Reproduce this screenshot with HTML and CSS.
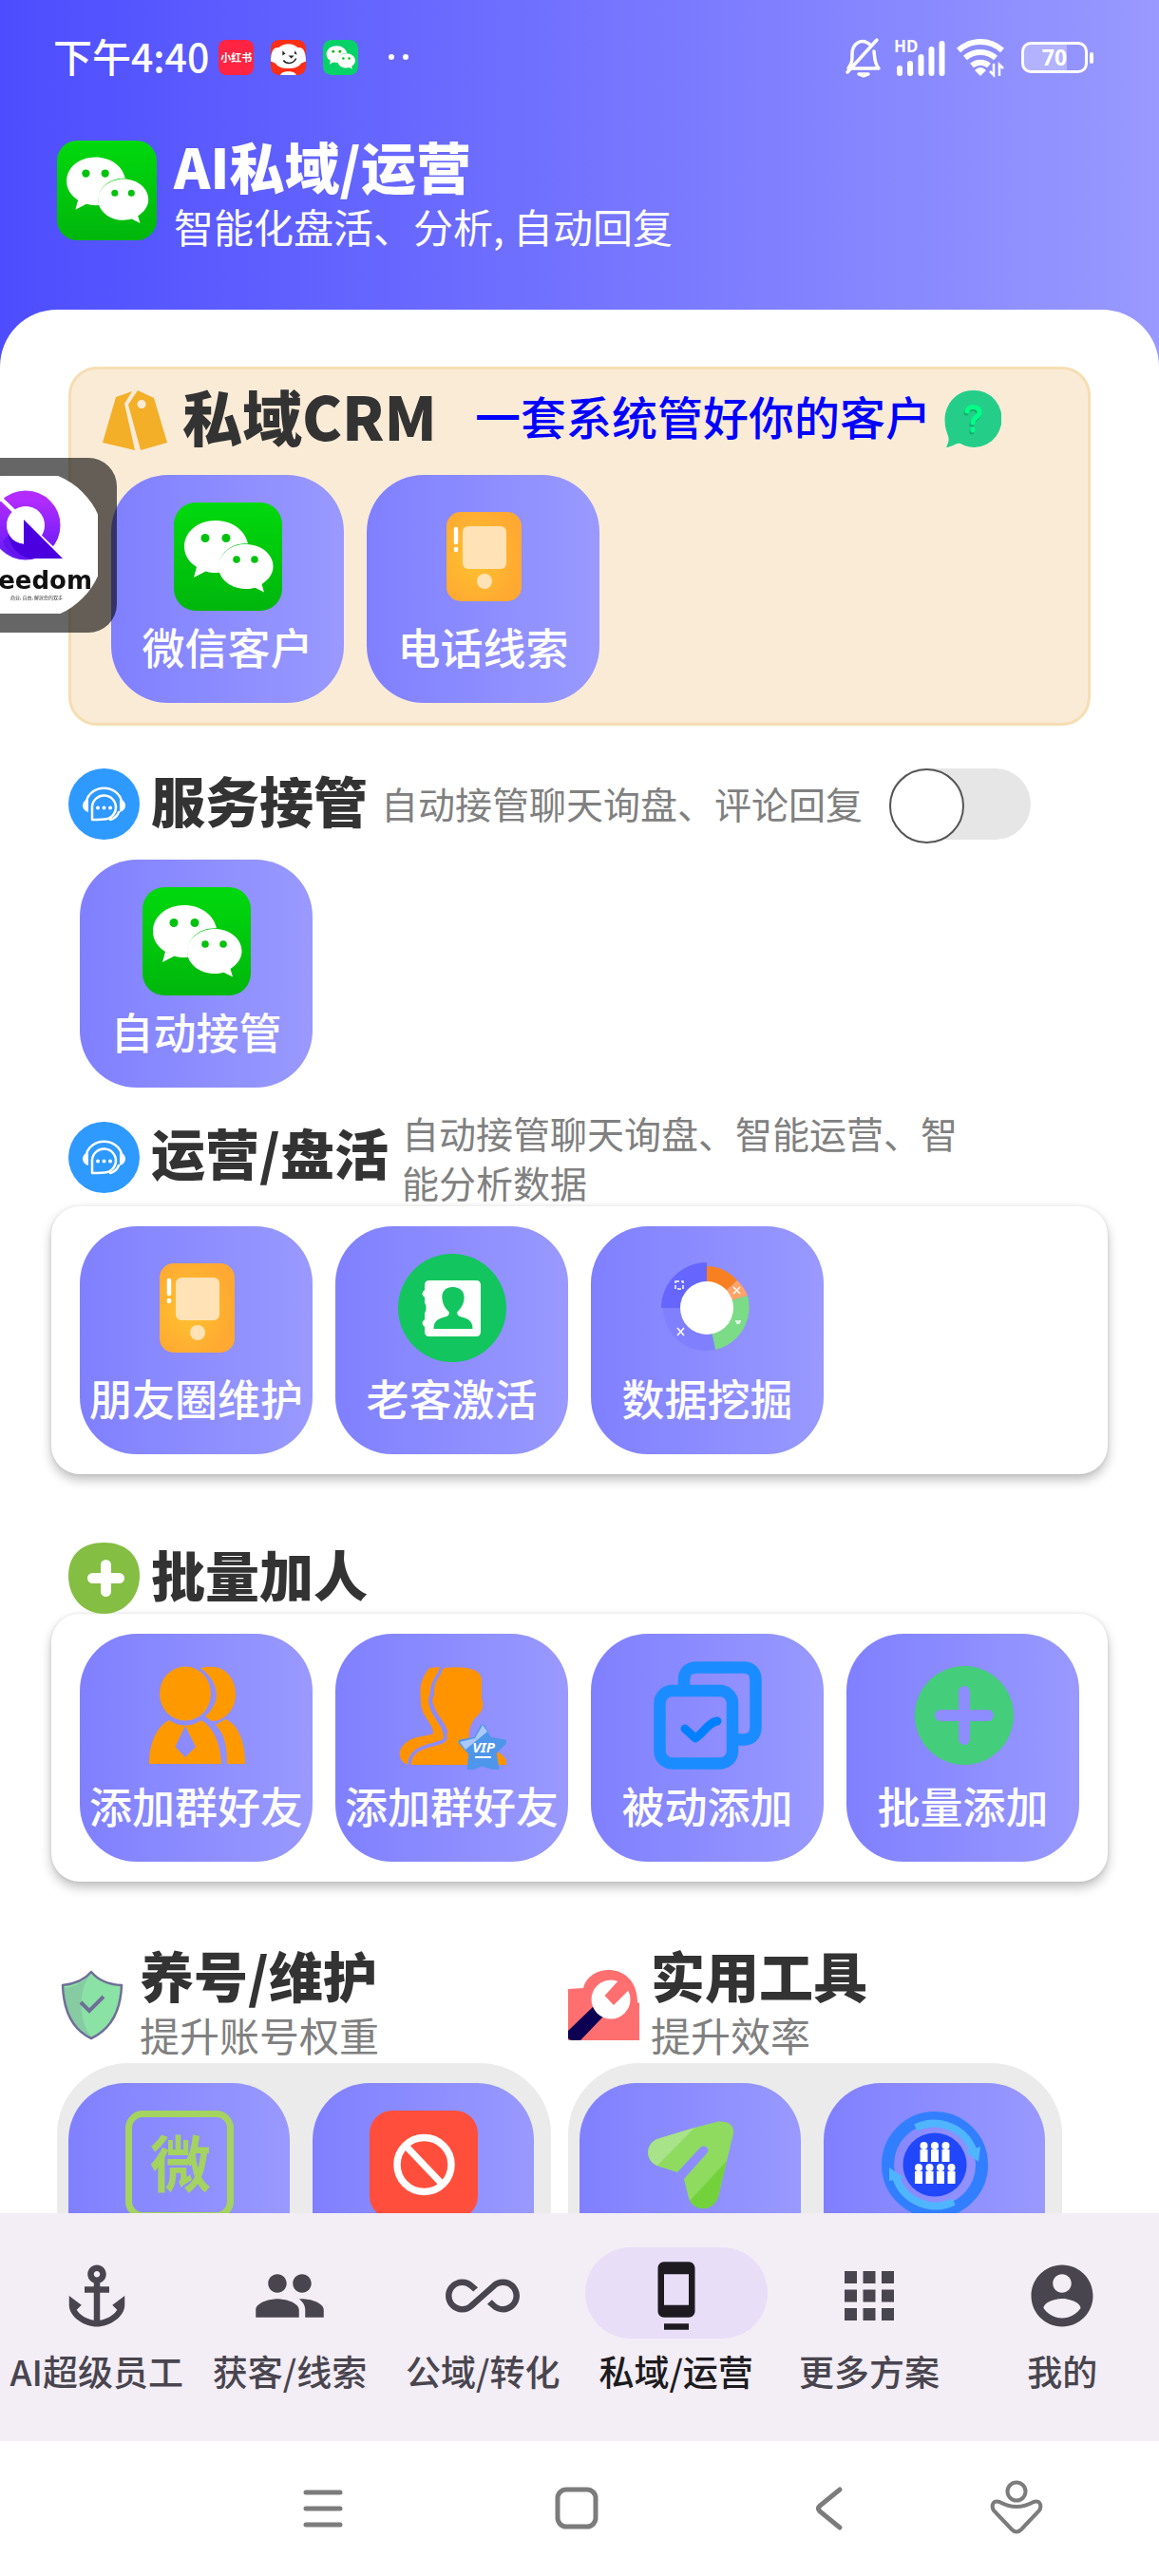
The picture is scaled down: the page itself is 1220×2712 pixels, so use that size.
FILE: index.html
```
<!DOCTYPE html>
<html lang="zh-CN">
<head>
  <meta charset="UTF-8">
  <meta name="viewport" content="width=device-width, initial-scale=1.0">
  <title>AI私域/运营</title>
  <link rel="stylesheet" href="styles.css">
</head>
<body>
  <!-- Shared icons -->
  <svg class="sprite" aria-hidden="true">
    <defs>
      <linearGradient id="wxGreen" x1="0" y1="0" x2="0" y2="1">
        <stop offset="0" stop-color="#00d90d"/>
        <stop offset="1" stop-color="#00b60c"/>
      </linearGradient>
      <radialGradient id="phoneOrange" cx="0.4" cy="0.5" r="0.6">
        <stop offset="0" stop-color="#ffc42e"/>
        <stop offset="1" stop-color="#ffa832"/>
      </radialGradient>
      <linearGradient id="logoPurple" x1="0" y1="0" x2="0" y2="1">
        <stop offset="0" stop-color="#b32cff"/>
        <stop offset="1" stop-color="#6a1cf5"/>
      </linearGradient>
    </defs>
    <symbol id="bubbles" viewBox="0 0 114 114">
      <path fill="#fff" d="M44 19C25 19 11 31 11 46.500c0 9 5 16.500 13 21.500l-3 11 12.500-6.500c3.500 1 7 1.500 11 1.500l3.500-.2c-4-18 11-31.500 30-30.500C75 29 61 19 44 19z"/>
      <path fill="#fff" d="M76 44c-16 0-29 10.500-29 23.500S60 91 76 91c3.500 0 6.500-.5 9.500-1.300L95 94.500l-2.500-8.500c7-4.500 12-11 12-18.500C104.500 54.500 92 44 76 44z"/>
      <g fill="#00c20d">
        <circle cx="33" cy="37.500" r="4.500"/><circle cx="55" cy="37.500" r="4.500"/>
        <circle cx="66" cy="60" r="3.800"/><circle cx="85" cy="60" r="3.800"/>
      </g>
    </symbol>
    <symbol id="wechat" viewBox="0 0 114 114">
      <rect width="114" height="114" rx="23" fill="url(#wxGreen)"/>
      <use href="#bubbles" width="114" height="114"/>
    </symbol>
    <symbol id="phone" viewBox="0 0 114 114">
      <rect x="18" y="10" width="79" height="94" rx="15" fill="url(#phoneOrange)"/>
      <rect x="35" y="25" width="46" height="45" rx="6" fill="#ffe2b5"/>
      <circle cx="58" cy="83" r="8" fill="#ffe2b5"/>
      <path d="M28 28v14M28 49v1" stroke="#fff" stroke-width="4.500" stroke-linecap="round"/>
    </symbol>
    <symbol id="headset" viewBox="0 0 75 75">
      <circle cx="37.500" cy="37.500" r="37.500" fill="#2e99ff"/>
      <g fill="none" stroke="#fff" stroke-width="2.500" stroke-linecap="round" stroke-linejoin="round">
        <path d="M19 34a19 17 0 0 1 37 0"/>
        <path d="M25 54v-14a12.500 12.500 0 1 1 12.500 13.500c-3 0-4 .5-12.500.5z"/>
        <path d="M53 46c-2 5-5 7-9 8"/>
      </g>
      <path fill="#fff" d="M21 32c-8 2-8 12 0 14zM54 32c8 2 8 12 0 14z"/>
      <g fill="#fff"><circle cx="31" cy="41.500" r="2"/><circle cx="37.500" cy="41.500" r="2"/><circle cx="44" cy="41.500" r="2"/></g>
    </symbol>
  </svg>

  <div class="app">
    <!-- Status bar -->
    <div class="status-bar">
      <div class="status-left">
        <span class="clock">下午4:40</span>
        <span class="notice notice-red">小红书</span>
        <svg class="notice" viewBox="0 0 36 36">
          <rect width="36" height="36" rx="8" fill="#fb2e16"/>
          <path fill="#fff" d="M8 8c6-5 14-5 20 0 5-1 8 4 8 14l-5 2c-3 7-23 7-26 0L0 22C0 12 3 7 8 8zM10 36c0-5 16-5 16 0z"/>
          <path fill="#222" d="M12 11l3 3-3 2zM25 11l2 4-3-1zM18 16h6l-3 3z"/>
          <path d="M13 21c3 4 10 4 13-2" fill="none" stroke="#222" stroke-width="1.500"/>
        </svg>
        <svg class="notice" viewBox="0 0 114 114"><rect width="114" height="114" rx="25" fill="#07d267"/><use href="#bubbles" width="114" height="114"/></svg>
        <span class="dots"><i></i><i></i></span>
      </div>
      <div class="status-right">
        <svg width="40" height="44" viewBox="0 0 40 44" fill="none" stroke="#fff" stroke-width="3.500" stroke-linecap="round" stroke-linejoin="round">
          <path d="M28 10C17 0 8 9 8 19c0 7 0 9-4 15h32c-5-6-4-11-5-18M34 4L3 38"/>
          <path d="M15 40h10l-5 2z" fill="#fff"/>
        </svg>
        <svg width="54" height="44" viewBox="0 0 54 44">
          <text x="0" y="17" class="hd">HD</text>
          <path d="M6 39v-5M17 39V29M28.500 39V22M39.500 39v-25M50.500 39V8" stroke="#fff" stroke-width="6" stroke-linecap="round"/>
        </svg>
        <svg width="52" height="44" viewBox="0 0 52 44">
          <path d="M2 15a34 34 0 0 1 46 0M9 23a24 24 0 0 1 32 0M16 31a14 14 0 0 1 18 0" fill="none" stroke="#fff" stroke-width="6"/>
          <path d="M19 36q6-6 12 0l-6 6z" fill="#fff"/>
          <path d="M39 29v12l-4-4M45 42V30l4 4" stroke="#fff" stroke-width="2.500" fill="none"/>
        </svg>
        <span class="battery">70</span>
      </div>
    </div>

    <header class="header">
      <svg class="header-logo" viewBox="0 0 114 114"><use href="#wechat"/></svg>
      <div>
        <h1 class="header-title">AI私域/运营</h1>
        <p class="header-subtitle">智能化盘活、分析, 自动回复</p>
      </div>
    </header>

    <main class="content">
      <!-- CRM card -->
      <section class="crm-card">
        <div class="crm-head">
          <svg width="68" height="64" viewBox="0 0 68 64" fill="#f3af28">
            <path d="M14 7L31 1l-8 13 11 49L0 55z"/>
            <path fill-rule="evenodd" d="M37 0l17 8 14 47-28 8-13-48zM41 10a4.500 4.500 0 1 0 .1 0z"/>
          </svg>
          <h2 class="crm-title">私域CRM</h2>
          <span class="crm-slogan">一套系统管好你的客户</span>
          <button class="help" aria-label="帮助">
            <svg width="60" height="62" viewBox="0 0 60 62">
              <path fill="#24ce88" d="M30 1a29 30 0 1 1-11 57c-5-4-9 2-17 3 4-9 3-9 0-18C-4 22 9 1 30 1z"/>
              <path d="M24 23c1-6 13-6 13 1 0 5-7 5-7 11M30 42v1" fill="none" stroke="#1aa96e" stroke-width="5" stroke-linecap="round" transform="translate(-1 2)"/>
              <path d="M24 23c1-6 13-6 13 1 0 5-7 5-7 11M30 42v1" fill="none" stroke="#00ff88" stroke-width="5" stroke-linecap="round"/>
            </svg>
          </button>
        </div>
        <div class="tiles">
          <button class="tile"><svg viewBox="0 0 114 114"><use href="#wechat"/></svg>微信客户</button>
          <button class="tile"><svg viewBox="0 0 114 114"><use href="#phone"/></svg>电话线索</button>
        </div>
      </section>

      <!-- Service takeover -->
      <section>
        <div class="section-head">
          <svg class="section-icon"><use href="#headset"/></svg>
          <h2 class="section-title">服务接管</h2>
          <label class="section-desc" for="takeover">自动接管聊天询盘、评论回复</label>
          <input type="checkbox" role="switch" class="switch" id="takeover">
        </div>
        <div class="tiles panel-plain">
          <button class="tile"><svg viewBox="0 0 114 114"><use href="#wechat"/></svg>自动接管</button>
        </div>
      </section>

      <!-- Operation -->
      <section>
        <div class="section-head">
          <svg class="section-icon"><use href="#headset"/></svg>
          <h2 class="section-title">运营/盘活</h2>
          <p class="section-desc">自动接管聊天询盘、智能运营、智能分析数据</p>
        </div>
        <div class="tiles panel">
          <button class="tile"><svg viewBox="0 0 114 114"><use href="#phone"/></svg>朋友圈维护</button>
          <button class="tile">
            <svg viewBox="0 0 114 114">
              <circle cx="57" cy="57" r="57" fill="#13c55e"/>
              <path fill="#fff" d="M33 28h49q5 0 5 5v49q0 5-5 5H33q-5 0-5-5v-5q-5-4 0-8V46q-5-4 0-8v-5q0-5 5-5z"/>
              <path fill="#13c55e" d="M57.500 35c-8 0-12 5-11 13 1 6 3 9 7 13 1 4-2 5-6 6-7 2-10 5-10 12h41c0-7-3-10-10-12-5-1-7-3-6-6 4-4 6-7 7-13 1-8-4-13-12-13z"/>
              <path d="M25 50c6 0 6 14 0 14z" fill="#13c55e"/>
            </svg>老客激活</button>
          <button class="tile">
            <svg viewBox="0 0 114 114">
              <path fill="#6666ff" d="M56 57H8A48 48 0 0 1 56 9z"/>
              <path fill="#f98020" d="M56 57V13a44 44 0 0 1 32 15z"/>
              <path fill="#ffa366" d="M56 57l32-29a44 44 0 0 1 11 16z"/>
              <path fill="#7bdb86" d="M56 57l43-13a46 46 0 0 1-34 57z"/>
              <path fill="#8080ff" d="M56 57l9 44A45 45 0 0 1 10 57z"/>
              <circle cx="56" cy="57" r="28" fill="#fff"/>
              <g stroke="#fff" stroke-width="1.500" fill="none"><path d="M84 35l7 7M91 35l-7 7M25 78l7 8M32 78l-7 8M86 71h6M87 73h4"/><rect x="23" y="29" width="8" height="8" stroke-dasharray="4 2"/></g>
            </svg>数据挖掘</button>
        </div>
      </section>

      <!-- Batch add -->
      <section class="section-spaced">
        <div class="section-head">
          <svg class="section-icon" viewBox="0 0 75 75">
            <path fill="#84be42" d="M37.500 0C60 0 75 13 75 35S59 75 37.500 75 0 58 0 35 15 0 37.500 0z"/>
            <path d="M39.500 23.500v28M25.500 37.500h28" stroke="#fff" stroke-width="11" stroke-linecap="round"/>
          </svg>
          <h2 class="section-title">批量加人</h2>
        </div>
        <div class="tiles panel">
          <button class="tile">
            <svg viewBox="0 0 114 114" fill="#ff9900">
              <ellipse cx="45" cy="34" rx="27" ry="28.500"/>
              <path fill-rule="evenodd" d="M28 62q17 11 34 0c13 8 20 24 21 46H7c0-23 9-40 21-46zM45 68L34.500 90 45 101l11-11z"/>
              <path d="M61 7c24-6 37 9 37 28 0 15-11 28-25 28l-7-5c15-13 18-34-5-51zM77 67l10-6c14 5 21 24 21 47H89c0-20-3-32-12-41z"/>
            </svg>添加群好友</button>
          <button class="tile">
            <svg viewBox="0 0 114 114">
              <path fill="#ff9300" d="M48 7c20-2 39 0 40 12v21c4 7-1 14-5 18-8 6-9 20-8 27 12 9 39 6 40 24H14c0-32 40-18 38-36-4-12-11-15-14-26-3-5-2-7 0-12 0-13-1-16 10-28z"/>
              <path fill="#ff9300" d="M33 7l11-1c1 10-10 12-10 28-3 6-2 11 2 19 5 9 12 15 13 26-3 10-36 6-38 30C-4 105-2 83 25 79c10-2 13-2 12-5-2-11-13-17-13-31-1-14-2-22 9-36z"/>
              <path d="M46 6C43 18 36 18 36 34c-3 6-2 11 1 19 5 9 13 17 13 28-2 9-38 4-38 28" fill="none" stroke="#8b8bff" stroke-width="3.500"/>
              <path fill="#4e96ec" stroke="#4e96ec" stroke-width="5" stroke-linejoin="round" d="M89 69l7 13 16 3-11 11 3 17-15-5-14 5 2-16-11-12 16-3z"/>
              <path fill="#a9c9f8" d="M89 67l-8 14-16 4 6 8 23-19z"/>
              <text x="90" y="96" class="vip">VIP</text>
              <path d="M81 101h17" stroke="#fff" stroke-width="2"/>
            </svg>添加群好友</button>
          <button class="tile">
            <svg viewBox="0 0 114 114" fill="none" stroke="#1a8cff" stroke-width="12.500">
              <rect x="6.500" y="31" width="76.500" height="76.500" rx="13"/>
              <path d="M32 28v-8q0-13.500 13.500-13.500H94q13.500 0 13.500 13.500v49q0 13.500-13.500 13.500h-9"/>
              <path d="M33 71l11 10c8-5 14-17 23-18" stroke="#0080ff" stroke-width="9" stroke-linecap="round" stroke-linejoin="round"/>
            </svg>被动添加</button>
          <button class="tile">
            <svg viewBox="0 0 114 114">
              <circle cx="58" cy="57" r="52" fill="#44cd7b"/>
              <path d="M58 32v50M33 57h50" stroke="#8d8dff" stroke-width="12" stroke-linecap="round"/>
            </svg>批量添加</button>
        </div>
      </section>

      <!-- Maintenance and tools -->
      <div class="columns">
        <section>
          <div class="column-head">
            <svg class="section-icon" viewBox="0 0 75 75">
              <path fill="#8ae2a5" d="M36 4q11 12 31 14c-1 28-12 45-31 54C17 63 6 46 6 18q20-2 30-14z"/>
              <path fill="#86cba2" d="M8 20q15-1 28-15C22 20 22 55 36 71 16 60 8 46 8 20z"/>
              <path fill="none" stroke="#706e98" stroke-width="2.500" stroke-linejoin="round" d="M36 3q11 13 32 14c-1 29-13 47-32 56C17 64 7 46 6 17q20-2 30-14z"/>
              <path d="M25 35l9 9 15-15" stroke="#706e98" stroke-width="4" fill="none"/>
            </svg>
            <div>
              <h2 class="section-title">养号/维护</h2>
              <p class="column-desc">提升账号权重</p>
            </div>
          </div>
          <div class="tool-box">
            <button class="tile" aria-label="微">
              <svg viewBox="0 0 114 114"><rect x="3.500" y="3.500" width="107" height="107" rx="15" fill="none" stroke="#a5d35f" stroke-width="7"/><text x="58" y="80" class="wei">微</text></svg>
            </button>
            <button class="tile" aria-label="禁止">
              <svg viewBox="0 0 114 114"><rect width="114" height="114" rx="24" fill="#ff4f3c"/><path d="M38 37l38 40" stroke="#fff" stroke-width="7"/><circle cx="57.500" cy="57" r="28.500" fill="none" stroke="#fff" stroke-width="7.500"/></svg>
            </button>
          </div>
        </section>
        <section>
          <div class="column-head">
            <svg class="section-icon" viewBox="0 0 75 75">
              <path fill="#ff6f70" d="M0 21l16-1C22-7 73-8 73 35l2 1v39H0z"/>
              <path fill="#0d0052" d="M27 39l10 11-24 25H3L0 73v-8z"/>
              <circle cx="45" cy="32" r="20.500" fill="#fff"/>
              <path fill="#ff6f70" d="M54 11L38.500 28 48 38l16-16z"/>
            </svg>
            <div>
              <h2 class="section-title">实用工具</h2>
              <p class="column-desc">提升效率</p>
            </div>
          </div>
          <div class="tool-box">
            <button class="tile" aria-label="发送">
              <svg viewBox="0 0 114 114">
                <path fill="#8edb60" d="M84 12c12-2 19 3 18 12L86 91c-4 13-26 15-31 1l-5-20 24-27c4-5-2-10-7-6L43 65l-22-7c-12-6-12-22 0-28l40-12z"/>
                <path fill="#a9e389" d="M61 18L22 58c-13-6-13-22 0-28z"/>
                <path fill="#73d23b" d="M95 53L56 95c8 13 26 10 30-4z"/>
              </svg>
            </button>
            <button class="tile" aria-label="群组">
              <svg viewBox="0 0 114 114">
                <circle cx="57" cy="57" r="49.500" fill="none" stroke="#317fff" stroke-width="13"/>
                <circle cx="57" cy="57" r="33.500" fill="#2147fb"/>
                <g fill="none" stroke="#50b5ff" stroke-width="8"><path d="M37 18a44 44 0 0 1 61 26M77 96A44 44 0 0 1 16 70"/></g>
                <path fill="#50b5ff" d="M89 43l16-5-2 16zM9 60l16 11-16 3z"/>
                <g stroke="#fff" stroke-width="8"><path d="M45.500 41v13M57 41v13M68.500 41v13M40 64v13M51.500 64v13M63 64v13M74.500 64v13"/></g>
                <g fill="#fff"><circle cx="45.500" cy="37" r="4"/><circle cx="57" cy="37" r="4"/><circle cx="68.500" cy="37" r="4"/><circle cx="40" cy="60" r="4"/><circle cx="51.500" cy="60" r="4"/><circle cx="63" cy="60" r="4"/><circle cx="74.500" cy="60" r="4"/></g>
              </svg>
            </button>
          </div>
        </section>
      </div>
    </main>

    <!-- Bottom navigation -->
    <nav class="nav">
      <a href="#" class="nav-link">
        <span class="nav-icon"><svg viewBox="0 0 24 24"><path d="M17 15l1.550 1.550c-.96 1.690-3.330 3.040-5.550 3.370V11h3V9h-3V7.820C14.160 7.400 15 6.300 15 5c0-1.650-1.350-3-3-3S9 3.350 9 5c0 1.300.84 2.400 2 2.820V9H8v2h3v8.920c-2.220-.33-4.590-1.680-5.550-3.370L7 15l-4-3v3c0 3.880 4.920 7 9 7s9-3.120 9-7v-3l-4 3zM12 4c.55 0 1 .45 1 1s-.45 1-1 1-1-.45-1-1 .45-1 1-1z"/></svg></span>
        AI超级员工
      </a>
      <a href="#" class="nav-link">
        <span class="nav-icon"><svg viewBox="0 0 24 24"><path d="M16 11c1.660 0 2.990-1.340 2.990-3S17.660 5 16 5s-3 1.340-3 3 1.340 3 3 3zm-8 0c1.660 0 2.990-1.340 2.990-3S9.660 5 8 5 5 6.340 5 8s1.340 3 3 3zm0 2c-2.330 0-7 1.170-7 3.500V19h14v-2.500C15 14.170 10.330 13 8 13zm8 0c-.29 0-.62.02-.97.05 1.160.84 1.970 1.970 1.970 3.450V19h6v-2.500c0-2.330-4.670-3.500-7-3.500z"/></svg></span>
        获客/线索
      </a>
      <a href="#" class="nav-link">
        <span class="nav-icon"><svg viewBox="0 0 24 24"><path d="M18.600 6.620c-1.440 0-2.800.56-3.770 1.530L7.800 14.390c-.64.64-1.490.99-2.400.99-1.870 0-3.390-1.510-3.390-3.380S3.530 8.620 5.400 8.620c.91 0 1.760.35 2.440 1.030l1.130 1 1.510-1.340L9.220 8.200C8.200 7.180 6.840 6.620 5.400 6.620 2.420 6.620 0 9.040 0 12s2.420 5.380 5.400 5.380c1.440 0 2.800-.56 3.770-1.530l7.030-6.240c.64-.64 1.490-.99 2.400-.99 1.870 0 3.390 1.510 3.390 3.380s-1.520 3.380-3.390 3.380c-.9 0-1.760-.35-2.440-1.030l-1.140-1.010-1.510 1.340 1.270 1.120c1.020 1.010 2.370 1.570 3.820 1.570 2.980 0 5.400-2.410 5.400-5.380s-2.420-5.370-5.400-5.370z"/></svg></span>
        公域/转化
      </a>
      <a href="#" class="nav-link active" aria-current="page">
        <span class="nav-icon"><svg viewBox="0 0 24 24"><path d="M8 23h8v-2H8v2zm8-21.990L8 1c-1.100 0-2 .9-2 2v14c0 1.100.9 2 2 2h8c1.100 0 2-.9 2-2V3c0-1.100-.9-1.990-2-1.990zM16 15H8V5h8v10z"/></svg></span>
        私域/运营
      </a>
      <a href="#" class="nav-link">
        <span class="nav-icon"><svg viewBox="0 0 24 24"><path d="M4 8h4V4H4v4zm6 12h4v-4h-4v4zm-6 0h4v-4H4v4zm0-6h4v-4H4v4zm6 0h4v-4h-4v4zm6-10v4h4V4h-4zm-6 4h4V4h-4v4zm6 6h4v-4h-4v4zm0 6h4v-4h-4v4z"/></svg></span>
        更多方案
      </a>
      <a href="#" class="nav-link">
        <span class="nav-icon"><svg viewBox="0 0 24 24"><path d="M12 2C6.480 2 2 6.480 2 12s4.480 10 10 10 10-4.480 10-10S17.520 2 12 2zm0 3c1.660 0 3 1.340 3 3s-1.340 3-3 3-3-1.340-3-3 1.340-3 3-3zm0 14.200c-2.500 0-4.710-1.280-6-3.220.03-1.990 4-3.080 6-3.080 1.990 0 5.970 1.090 6 3.080-1.290 1.940-3.500 3.220-6 3.220z"/></svg></span>
        我的
      </a>
    </nav>

    <!-- System keys -->
    <div class="system-bar">
      <button aria-label="菜单"><svg viewBox="0 0 60 60"><path d="M12 13h36M12 30h36M12 47h36"/></svg></button>
      <button aria-label="主页"><svg viewBox="0 0 60 60"><rect x="10" y="10" width="40" height="39" rx="9"/></svg></button>
      <button aria-label="返回"><svg viewBox="0 0 60 60"><path d="M40 10L19 27q-3 3 0 6l21 17"/></svg></button>
      <button aria-label="辅助"><svg class="thin" viewBox="0 0 60 60"><circle cx="30" cy="12" r="9.500"/><path d="M12 23q18 10 36 0c7-2 9 4 6 9L35 52q-5 5-10 0L6 32c-3-5-1-11 6-9z"/></svg></button>
    </div>
  </div>

  <!-- Floating assistant -->
  <button class="floating" aria-label="Freedom">
    <svg viewBox="0 0 123 184">
      <clipPath id="logoClip"><rect x="-42" y="19" width="145" height="145"/></clipPath>
      <circle cx="31" cy="92" r="79" fill="#fff" clip-path="url(#logoClip)"/>
      <circle cx="27" cy="71" r="28" fill="none" stroke="url(#logoPurple)" stroke-width="17"/>
      <path d="M-4 38L60 100" stroke="#fff" stroke-width="4"/>
      <circle cx="27" cy="71" r="20" fill="#fff"/>
      <path fill="#6414ee" d="M9 81c4 7 10 9 16 10l8 15h-6C16 106 6 98 3 88z"/>
      <path fill="#4b00e0" d="M25 65l41 41H33C22 105 11 96 9 81c4 7 10 9 16 10z"/>
      <text x="97" y="138" class="brand">eedom</text>
      <text x="66" y="149" class="brand-sub">商业, 自由, 解放您的双手</text>
    </svg>
  </button>
</body>
</html>
```
FILE: styles.css
```
:root {
  --ink: #333333;
  --gray: #808080;
  --nav-ink: #49454f;
  --tile: linear-gradient(90deg, #8080ff, #9999ff);
}

* {
  margin: 0;
  padding: 0;
  box-sizing: border-box;
}

body {
  font-family: 'Noto Sans CJK SC', 'Noto Sans', sans-serif;
  color: var(--ink);
  background: white;
}

button {
  font: inherit;
  border: none;
  background: none;
  cursor: pointer;
}

svg {
  display: block;
  flex-shrink: 0;
}

.sprite {
  position: absolute;
  width: 0;
  height: 0;
}

.app {
  display: flex;
  flex-direction: column;
  height: 100vh;
  background: linear-gradient(90deg, #4d4dff, #9999ff);
}

/* Status bar */
.status-bar {
  display: flex;
  justify-content: space-between;
  align-items: center;
  height: 120px;
  padding: 0 75px 0 56px;
  color: white;
  flex-shrink: 0;
}

.status-left {
  display: flex;
  align-items: center;
  gap: 18px;
}

.clock {
  font-size: 41px;
  font-weight: 500;
  line-height: 56px;
  margin-right: -8px;
  padding-bottom: 4px;
}

.notice {
  width: 37px;
  height: 37px;
  border-radius: 8px;
}

.notice-red {
  background: #ff2442;
  font-size: 11px;
  font-weight: 700;
  line-height: 37px;
  text-align: center;
}

.dots {
  display: flex;
  gap: 9px;
  margin-left: 14px;
}

.dots i {
  width: 6px;
  height: 6px;
  border-radius: 50%;
  background: white;
}

.status-right {
  display: flex;
  align-items: center;
  gap: 12px;
}

.status-right svg {
  overflow: visible;
}

.hd {
  font: 700 17px 'Noto Sans', sans-serif;
  fill: white;
}

.battery {
  position: relative;
  width: 70px;
  height: 33px;
  margin-left: 4px;
  border: 3px solid white;
  border-radius: 10px;
  background: linear-gradient(90deg, rgba(255, 255, 255, 0.3) 70%, transparent 70%);
  font: 700 23px/27px 'Noto Sans', sans-serif;
  text-align: center;
}

.battery::after {
  content: '';
  position: absolute;
  right: -9px;
  top: 8px;
  width: 4px;
  height: 12px;
  border-radius: 2px;
  background: white;
}

/* Header */
.header {
  display: flex;
  align-items: center;
  gap: 18px;
  padding: 20px 60px 58px;
  color: white;
  flex-shrink: 0;
}

.header-logo {
  width: 105px;
  height: 105px;
  margin-bottom: 8px;
}

.header-title {
  font-size: 58px;
  font-weight: 900;
  line-height: 68px;
}

.header-subtitle {
  font-size: 42px;
  line-height: 60px;
}

/* Content sheet */
.content {
  flex: 1;
  min-height: 0;
  padding: 60px 54px 0;
  background: white;
  border-radius: 60px 60px 0 0;
  overflow-y: auto;
  scrollbar-width: none;
}

.crm-card {
  margin: 0 18px 45px;
  padding: 12px 42px 21px;
  background: #faebd7;
  border: 3px solid #f5deb3;
  border-radius: 30px;
}

.crm-head {
  display: flex;
  align-items: center;
  height: 84px;
  margin: 0 -9px 15px;
}

.crm-title {
  margin: 0 40px 0 16px;
  padding-bottom: 12px;
  font-size: 63px;
  font-weight: 900;
  line-height: 72px;
}

.crm-slogan {
  padding-bottom: 12px;
  font-size: 48px;
  font-weight: 500;
  line-height: 72px;
  color: #0000ff;
}

.help {
  margin-left: 14px;
  padding-bottom: 4px;
}

.tiles {
  display: grid;
  grid-template-columns: repeat(auto-fill, 245px);
  gap: 24px;
}

.tile {
  display: flex;
  flex-direction: column;
  align-items: center;
  gap: 8px;
  height: 240px;
  padding-top: 29px;
  background: var(--tile);
  border-radius: 60px;
  color: white;
  font-size: 45px;
  font-weight: 500;
  line-height: 60px;
  white-space: nowrap;
}

.tile svg {
  width: 114px;
  height: 114px;
}

.section-spaced {
  margin-top: 72px;
}

.section-head {
  display: flex;
  align-items: center;
  min-height: 75px;
  padding: 0 18px;
}

.section-icon {
  width: 75px;
  height: 75px;
}

.section-title {
  margin-left: 12px;
  padding-bottom: 12px;
  font-size: 57px;
  font-weight: 900;
  line-height: 60px;
  white-space: nowrap;
}

.section-desc {
  max-width: 618px;
  margin-left: 14px;
  font-size: 39px;
  line-height: 52px;
  color: var(--gray);
}

label.section-desc {
  padding-bottom: 4px;
}

.switch {
  appearance: none;
  width: 149px;
  height: 75px;
  margin-left: 28px;
  border-radius: 38px;
  background: #e6e6e6;
  cursor: pointer;
}

.switch::before {
  content: '';
  display: block;
  width: 75px;
  height: 75px;
  border: 2px solid #555555;
  border-radius: 50%;
  background: white;
}

.switch:checked {
  background: #8080ff;
}

.switch:checked::before {
  margin-left: auto;
}

.panel,
.panel-plain {
  padding: 21px 30px;
}

.panel {
  border-radius: 30px;
  background: white;
  box-shadow: 0 6px 12px rgba(0, 0, 0, 0.25), 0 0 4px rgba(0, 0, 0, 0.08);
}

/* Two column area */
.columns {
  display: flex;
  gap: 18px;
  margin: 67px 48px 0 6px;
}

.columns section {
  flex: 1;
}

.column-head {
  display: flex;
  align-items: center;
}

.column-head .section-title {
  padding-bottom: 4px;
}

.column-desc {
  margin-left: 12px;
  font-size: 42px;
  line-height: 60px;
  color: var(--gray);
}

.tool-box {
  display: grid;
  grid-template-columns: 1fr 1fr;
  gap: 24px;
  padding: 21px 18px 21px 12px;
  background: #ebebeb;
  border-radius: 75px;
}

.vip {
  font: italic 700 15px 'Noto Sans', sans-serif;
  fill: white;
  text-anchor: middle;
}

.wei {
  font-size: 64px;
  font-weight: 700;
  fill: #a5d35f;
  text-anchor: middle;
}

/* Bottom navigation */
.nav {
  display: flex;
  height: 240px;
  padding-top: 36px;
  background: #f3edf5;
  flex-shrink: 0;
}

.nav-link {
  flex: 1 1 0;
  display: flex;
  flex-direction: column;
  align-items: center;
  gap: 10px;
  color: var(--nav-ink);
  font-size: 37px;
  font-weight: 500;
  line-height: 48px;
  text-decoration: none;
  white-space: nowrap;
}

.nav-icon {
  display: grid;
  place-items: center;
  width: 192px;
  height: 96px;
  padding-top: 6px;
  border-radius: 48px;
}

.nav-icon svg {
  width: 78px;
  height: 78px;
  fill: currentColor;
}

.nav-link.active {
  color: #1d1b20;
}

.nav-link.active .nav-icon {
  background: #e8def8;
}

.system-bar {
  display: grid;
  grid-template-columns: 1fr 1fr 1fr 126px;
  align-items: center;
  height: 142px;
  padding: 0 87px 0 207px;
  background: white;
  flex-shrink: 0;
}

.system-bar svg {
  width: 60px;
  height: 60px;
  margin: 0 auto;
  fill: none;
  stroke: #7c7c7c;
  stroke-width: 5;
  stroke-linecap: round;
}

.system-bar .thin {
  stroke-width: 4;
}

/* Floating assistant sits over the page edge */
.floating {
  position: absolute;
  left: 0;
  top: 482px;
  width: 123px;
  height: 184px;
  border-radius: 0 30px 30px 0;
  background: rgba(0, 0, 0, 0.6);
  overflow: hidden;
}

.brand {
  font: 700 26px 'DejaVu Sans', sans-serif;
  fill: #111111;
  text-anchor: end;
}

.brand-sub {
  font-size: 5px;
  fill: var(--ink);
  text-anchor: end;
}
```
